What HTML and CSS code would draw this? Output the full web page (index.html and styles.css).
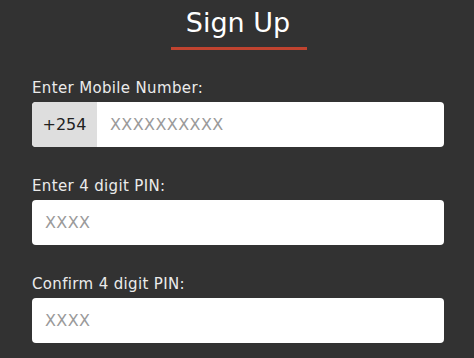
FILE: index.html
```html
<!DOCTYPE html>
<html>
<head>
<meta charset="utf-8">
<link rel="stylesheet" href="styles.css">
</head>
<body>
<div class="page">
  <h1 class="title">Sign Up</h1>
  <div class="rule"></div>
  <div class="field first">
    <label class="label">Enter Mobile Number:</label>
    <div class="box">
      <span class="prefix">+254</span>
      <span class="ph">XXXXXXXXXX</span>
    </div>
  </div>
  <div class="field">
    <label class="label">Enter 4 digit PIN:</label>
    <div class="box">
      <span class="ph">XXXX</span>
    </div>
  </div>
  <div class="field">
    <label class="label">Confirm 4 digit PIN:</label>
    <div class="box">
      <span class="ph">XXXX</span>
    </div>
  </div>
</div>
</body>
</html>
```
FILE: styles.css
```css
html, body {
  margin: 0;
  padding: 0;
  background: #323232;
  height: 100%;
  overflow: hidden;
}
.page {
  font-family: "DejaVu Sans", sans-serif;
  padding: 6px 30px 0 32px;
  display: flex;
  flex-direction: column;
}
.title {
  margin: 0;
  font-size: 27px;
  line-height: 33px;
  font-weight: 500;
  color: #ffffff;
  text-align: center;
}
.rule {
  width: 136px;
  height: 3px;
  background: #c0432f;
  margin: 8px auto 0;
  position: relative;
  left: 1px;
}
.field {
  display: flex;
  flex-direction: column;
  margin-top: 30px;
}
.field.first {
  margin-top: 29px;
}
.label {
  font-size: 15px;
  line-height: 18px;
  color: #ebebeb;
  letter-spacing: 0.35px;
  margin-bottom: 5px;
}
.box {
  height: 45px;
  background: #ffffff;
  border-radius: 4px;
  display: flex;
  align-items: stretch;
  overflow: hidden;
}
.prefix {
  width: 65px;
  background: #dedede;
  color: #222;
  font-size: 16px;
  display: flex;
  align-items: center;
  justify-content: center;
}
.ph {
  color: #9a9a9a;
  font-size: 16px;
  letter-spacing: 0.4px;
  display: flex;
  align-items: center;
  padding-left: 13px;
}
```
